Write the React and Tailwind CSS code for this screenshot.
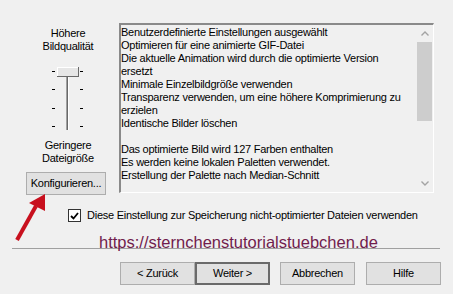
import React from 'react';

const lines = [
  'Benutzerdefinierte Einstellungen ausgewählt',
  'Optimieren für eine animierte GIF-Datei',
  'Die aktuelle Animation wird durch die optimierte Version',
  'ersetzt',
  'Minimale Einzelbildgröße verwenden',
  'Transparenz verwenden, um eine höhere Komprimierung zu',
  'erzielen',
  'Identische Bilder löschen',
  '',
  'Das optimierte Bild wird 127 Farben enthalten',
  'Es werden keine lokalen Paletten verwendet.',
  'Erstellung der Palette nach Median-Schnitt',
];

const Slider = () => (
  <svg width="40" height="72" viewBox="0 0 40 72" className="block">
    {[11, 29, 48, 66].map((y) => (
      <g key={y}>
        <rect x="4" y={y} width="3" height="1" fill="#000" />
        <rect x="32" y={y} width="3" height="1" fill="#000" />
      </g>
    ))}
    <rect x="18" y="15" width="1" height="55" fill="#a0a0a0" />
    <rect x="19" y="15" width="1" height="55" fill="#696969" />
    <rect x="20" y="15" width="1" height="55" fill="#fff" />
    <rect x="9" y="7" width="22" height="10" fill="#e6e6e6" />
    <rect x="9" y="7" width="22" height="1" fill="#fff" />
    <rect x="9" y="7" width="1" height="10" fill="#fff" />
    <rect x="9" y="16" width="22" height="1" fill="#696969" />
    <rect x="30" y="7" width="1" height="10" fill="#696969" />
  </svg>
);

const Chevron = ({ up }) => (
  <svg width="8" height="5" viewBox="0 0 8 5">
    <path d={up ? 'M0.5 4.5 L4 1 L7.5 4.5' : 'M0.5 0.5 L4 4 L7.5 0.5'} fill="none" stroke="#a3a3a3" strokeWidth="1.4" />
  </svg>
);

const Button = ({ children, isDefault, className = '' }) => (
  <div
    className={`${className} h-[23px] flex items-center justify-center bg-[#e1e1e1] ${
      isDefault ? 'border-2 border-[#6a6a6a]' : 'border border-[#adadad]'
    }`}
  >
    {children}
  </div>
);

export default function App() {
  return (
    <div className="relative w-[453px] h-[294px] overflow-hidden bg-[#f0f0f0] text-black text-[11px] leading-[13px] tracking-[-0.25px] font-['Liberation_Sans',Arial,sans-serif]">
      <div className="flex items-start pt-[23px]">
        <div className="w-[119px] pl-[26px] shrink-0">
          <div className="w-[84px] flex flex-col items-center pt-[4px]">
            <div>Höhere</div>
            <div>Bildqualität</div>
            <div className="mt-[7px]">
              <Slider />
            </div>
            <div className="mt-[7px]">Geringere</div>
            <div>Dateigröße</div>
            <Button className="mt-[7px] w-[80px] self-start h-[22px]">Konfigurieren...</Button>
          </div>
        </div>

        <div className="w-[315px] h-[170px] flex border-t-2 border-l-2 border-t-[#8a8a8a] border-l-[#8a8a8a] border-b border-r border-b-white border-r-white bg-[#f0f0f0]">
          <div className="flex-1 pt-[1px] whitespace-nowrap overflow-hidden">
            {lines.map((l, i) => (
              <div key={i} className="h-[13px]">{l}</div>
            ))}
          </div>
          <div className="w-[17px] flex flex-col bg-[#f0f0f0]">
            <div className="h-[17px] flex items-center justify-center">
              <Chevron up />
            </div>
            <div className="h-[79px] mx-[1px] bg-[#cdcdcd]" />
            <div className="flex-1" />
            <div className="h-[17px] flex items-center justify-center">
              <Chevron />
            </div>
          </div>
        </div>
      </div>

      <div className="flex items-center pl-[68px] mt-[14px] h-[13px]">
        <div className="w-[13px] h-[13px] bg-white border border-[#333] flex items-center justify-center">
          <svg width="9" height="8" viewBox="0 0 9 8">
            <path d="M1 4 L3.5 6.5 L8 1" fill="none" stroke="#000" strokeWidth="1.8" />
          </svg>
        </div>
        <span className="ml-[6px]">Diese Einstellung zur Speicherung nicht-optimierter Dateien verwenden</span>
      </div>

      <div className="mt-[26px] ml-[12px] w-[428px] h-[1px] bg-[#a0a0a0]" />

      <div className="flex mt-[13px] pl-[120px]">
        <Button className="w-[75px]">&lt; Zurück</Button>
        <Button className="w-[75px]" isDefault>Weiter &gt;</Button>
        <Button className="w-[75px] ml-[10px]">Abbrechen</Button>
        <Button className="w-[75px] ml-[11px]">Hilfe</Button>
      </div>

      <div className="absolute left-[99px] top-[233px] text-[16.5px] leading-[19px] tracking-normal text-[#701c4c] whitespace-nowrap">
        https://sternchenstutorialstuebchen.de
      </div>

      <svg className="absolute left-0 top-0" width="60" height="250" viewBox="0 0 60 250">
        <line x1="17" y1="240" x2="36" y2="206" stroke="#c8101e" strokeWidth="4" />
        <polygon points="45,194 29,203 45,211" fill="#c8101e" />
      </svg>
    </div>
  );
}
